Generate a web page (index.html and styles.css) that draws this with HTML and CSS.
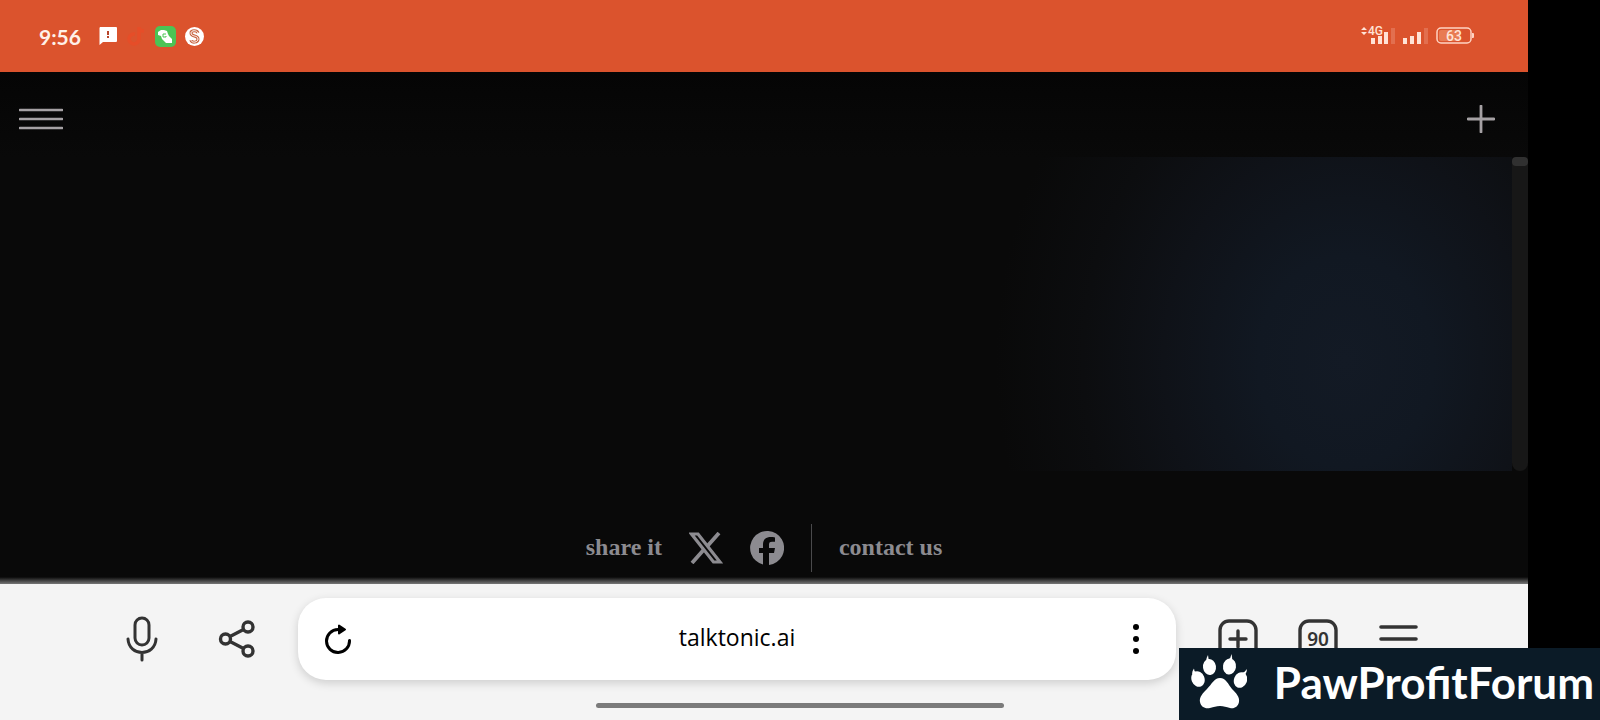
FILE: index.html
```html
<!DOCTYPE html>
<html lang="en">
<head>
    <meta charset="UTF-8">
    <meta name="viewport" content="width=device-width, initial-scale=1.0">
    <title>talktonic.ai</title>
    <link rel="stylesheet" href="styles.css">
</head>
<body>
    <div class="phone">
        <!-- Status bar -->
        <div class="status">
            <div class="status-left">
                <span class="time">9:56</span>
                <svg width="18" height="18" viewBox="0 0 18 18">
                    <path d="M1 0h16a1 1 0 0 1 1 1v13a1 1 0 0 1-1 1H4l-3.500 3V1z" fill="#fff"/>
                    <path d="M9 4v4M9 9v2" stroke="#b8452a" stroke-width="2"/>
                </svg>
                <svg width="20" height="20" viewBox="0 0 20 20" fill="none" stroke="#e64d28" stroke-width="3.500">
                    <path d="M9 8a5 5 0 1 0 4 5V1c0 3 2 4 5 4"/>
                </svg>
                <svg width="21" height="21" viewBox="0 0 21 21">
                    <rect width="21" height="21" rx="5" fill="#4bc455"/>
                    <path d="M3 6l3-2h3l3 1 1 3 1 2 3 3v4h-6l-4-4-1-3-3-1z" fill="#fff"/>
                    <path d="M11 8H8v3h3v-1" fill="none" stroke="#4bc455"/>
                </svg>
                <svg width="19" height="19" viewBox="0 0 19 19" fill="none">
                    <circle cx="9.500" cy="9.500" r="9.500" fill="#fff"/>
                    <path d="M13 6c-1-3-7-3-7 0 0 4 7 2 7 6 0 4-7 4-7 1" stroke="#c9633f" stroke-width="3"/>
                    <path d="M13 6c-1-3-7-3-7 0 0 4 7 2 7 6 0 4-7 4-7 1" stroke="#fff"/>
                </svg>
            </div>
            <div class="status-right">
                <svg width="34" height="24" viewBox="0 -3 34 24" fill="#ffe3d6">
                    <path d="M0 3l3-3 3 3zM0 5l3 3 3-3z"/>
                    <text class="net" x="7" y="8">4G</text>
                    <path d="M10 11h4v6h-4zM17 9h4v8h-4zM23 5h4v12h-4z"/>
                    <path d="M30 1h4v16h-4z" opacity=".2"/>
                </svg>
                <svg width="25" height="18" viewBox="0 0 25 18" fill="#ffe3d6">
                    <path d="M0 11h4v6H0zM7 9h4v8H7zM14 5h4v12h-4z"/>
                    <path d="M21 1h4v16h-4z" opacity=".2"/>
                </svg>
                <svg width="38" height="18" viewBox="0 0 38 18">
                    <rect x="1" y="1" width="34" height="15" rx="4" fill="none" stroke="#ffd3c2" stroke-width="1.500"/>
                    <rect x="3" y="3" width="20" height="11" rx="2" fill="#e87b53"/>
                    <path d="M36 6h1q1 0 1 1v3q0 1-1 1h-1z" fill="#ffd3c2"/>
                    <text class="charge" x="18" y="14" text-anchor="middle">63</text>
                </svg>
            </div>
        </div>

        <!-- Page -->
        <header class="topbar">
            <button class="icon-btn" aria-label="Menu">
                <svg width="44" height="22" viewBox="0 0 44 22" stroke="#a5a1a4" stroke-width="2.600" stroke-linecap="round">
                    <path d="M1 2h42M1 11h42M1 20h42"/>
                </svg>
            </button>
            <button class="icon-btn" aria-label="New chat">
                <svg width="28" height="28" viewBox="0 0 28 28" stroke="#a5a1a4" stroke-width="2.800" stroke-linecap="round">
                    <path d="M14 1v26M1 14h26"/>
                </svg>
            </button>
        </header>
        <main class="chat">
            <div class="glow"></div>
            <div class="track"><div class="thumb"></div></div>
        </main>
        <footer class="share">
            <span>share it</span>
            <a href="#" aria-label="Share on X">
                <svg width="34" height="32" viewBox="0 0 34 32" fill="none" stroke="#8c8b90">
                    <path d="M2.500 2h6.500L31 30h-6.500z" stroke-width="3.200"/>
                    <path d="M30 1L18.500 14M14.500 18L3 31" stroke-width="3.800"/>
                </svg>
            </a>
            <a href="#" aria-label="Share on Facebook">
                <svg width="34" height="34" viewBox="0 0 34 34">
                    <path d="M13 33.500A17 17 0 1 1 19 33.900V22h5l1-5h-6v-3.500c0-2 1-2.700 3-2.700h3V6.500c-7-1.500-12 .5-12 7V17H9v5h4z" fill="#8c8b90"/>
                </svg>
            </a>
            <a class="contact" href="#">contact us</a>
        </footer>

        <!-- Browser toolbar -->
        <nav class="toolbar">
            <button class="icon-btn tool" aria-label="Voice search">
                <svg width="32" height="46" viewBox="0 0 32 46" fill="none" stroke="#333" stroke-width="3" stroke-linecap="round">
                    <rect x="9" y="2" width="14" height="27" rx="7"/>
                    <path d="M2 23c1 18 27 18 28 0M16 37v7"/>
                </svg>
            </button>
            <button class="icon-btn tool" aria-label="Share">
                <svg width="38" height="38" viewBox="0 0 38 38" fill="none" stroke="#333" stroke-width="3.400">
                    <circle cx="7.500" cy="19" r="5"/>
                    <circle cx="30" cy="7" r="5"/>
                    <circle cx="30" cy="31" r="5"/>
                    <path d="M12 16.500L25.500 9.500M12 21.500l13.500 7"/>
                </svg>
            </button>
            <div class="address">
                <button class="icon-btn" aria-label="Reload">
                    <svg width="28" height="30" viewBox="0 0 28 30" fill="none" stroke="#000" stroke-width="3" stroke-linecap="round">
                        <path d="M25.500 16.500A11.500 11.500 0 1 1 14 5.500"/>
                        <path d="M15 1.500v8l6-4z" fill="#000" stroke-width="2" stroke-linejoin="round"/>
                    </svg>
                </button>
                <input class="url" type="text" value="talktonic.ai" aria-label="Address">
                <button class="icon-btn" aria-label="Page options">
                    <svg width="28" height="30" viewBox="0 0 28 30">
                        <circle cx="14" cy="3" r="3"/>
                        <circle cx="14" cy="15" r="3"/>
                        <circle cx="14" cy="27" r="3"/>
                    </svg>
                </button>
            </div>
            <button class="icon-btn tool" aria-label="New tab">
                <svg width="40" height="40" viewBox="0 0 40 40" fill="none" stroke="#333" stroke-width="3.400" stroke-linecap="round">
                    <rect x="2" y="2" width="36" height="36" rx="9"/>
                    <path d="M20 12v16M12 20h16"/>
                </svg>
            </button>
            <button class="icon-btn tool" aria-label="Tabs">
                <svg width="40" height="40" viewBox="0 0 40 40">
                    <rect x="2" y="2" width="36" height="36" rx="9" fill="none" stroke="#333" stroke-width="3.400"/>
                    <text class="tabs" x="20" y="27" text-anchor="middle">90</text>
                </svg>
            </button>
            <button class="icon-btn tool" aria-label="Browser menu">
                <svg width="40" height="28" viewBox="0 0 40 28" stroke="#333" stroke-width="3.600" stroke-linecap="round">
                    <path d="M3 2h35M3 14h35M3 26h35"/>
                </svg>
            </button>
        </nav>
    </div>

    <div class="home-line"></div>

    <div class="brand">
        <svg width="56" height="56" viewBox="0 0 56 56" fill="#fff">
            <ellipse cx="7" cy="25" rx="6.500" ry="8" transform="rotate(-22 7 25)"/>
            <ellipse cx="18.500" cy="13" rx="6.500" ry="8" transform="rotate(-8 18.500 13)"/>
            <ellipse cx="38.500" cy="12.500" rx="6.500" ry="8" transform="rotate(8 38.500 12.500)"/>
            <ellipse cx="49.500" cy="26" rx="6.500" ry="8" transform="rotate(22 49.500 26)"/>
            <path d="M1 20q0-3 2-5.500 0 3 2 4zM15 8q0-4 2-7 0 4 2 6zM37 6q3-2 3.500-6 1 4 .5 7zM51 19q3-1 5-4 0 3-2 6z"/>
            <path d="M29 24c6 0 8 6 12 11 4 4 8 8 7 13-1 5-5 7-9 6-4-1-6-2-10-2s-6 1-10 2c-5 1-9-1-10-6-1-5 3-9 7-13 5-5 7-11 13-11z"/>
        </svg>
        <span>PawProfitForum</span>
    </div>
</body>
</html>
```
FILE: styles.css
```css
body {
    margin: 0;
    background: #000;
    font-family: "Noto Sans", sans-serif;
}

.phone {
    display: flex;
    flex-direction: column;
    min-height: 100vh;
    margin-right: 72px;
    background: #090909;
}

.icon-btn {
    display: flex;
    align-items: center;
    justify-content: center;
    padding: 0;
    border: 0;
    background: none;
    cursor: pointer;
}

/* status bar */
.status {
    display: flex;
    justify-content: space-between;
    align-items: center;
    height: 72px;
    padding: 0 54px 0 39px;
    background: #db532d;
}

.status-left {
    display: flex;
    align-items: center;
    gap: 9px;
}

.time {
    margin-right: 9px;
    font-family: Lato, sans-serif;
    font-size: 21px;
    font-weight: bold;
    color: #fff0e8;
}

.status-right {
    display: flex;
    align-items: center;
    gap: 8px;
}

.net {
    font-family: Roboto, sans-serif;
    font-size: 12px;
    font-weight: 500;
}

.charge {
    font-family: Roboto, sans-serif;
    font-size: 14px;
    font-weight: 500;
    fill: #ffe3d6;
}

/* page */
.topbar {
    display: flex;
    justify-content: space-between;
    align-items: center;
    height: 85px;
    padding: 9px 33px 0 19px;
    box-sizing: border-box;
    background: linear-gradient(#050505, #090909);
}

.chat {
    display: flex;
    flex: 1;
}

.glow {
    flex: 1;
    background: radial-gradient(ellipse 350px 420px at 89% 65%, #131a25, #111822 25%, #0f1218 52%, #0c0d0f 75%, #090909 100%);
}

.track {
    width: 16px;
    border-radius: 8px;
    background: #171717;
}

.thumb {
    height: 9px;
    border-radius: 4px;
    background: #303030;
}

.share {
    display: flex;
    justify-content: center;
    align-items: center;
    gap: 27px;
    height: 113px;
    padding-top: 40px;
    box-sizing: border-box;
    background: linear-gradient(#090909 106px, #777);
    font-family: "Liberation Serif", serif;
    font-size: 24px;
    font-weight: bold;
    color: #8c8b90;
}

.share a {
    display: flex;
    color: inherit;
    text-decoration: none;
}

.share .contact {
    align-items: center;
    height: 48px;
    padding-left: 27px;
    border-left: 1px solid #4a4a4c;
}

/* browser toolbar */
.toolbar {
    display: flex;
    align-items: center;
    height: 136px;
    padding: 0 110px 27px 122px;
    box-sizing: border-box;
    background: #f4f4f4;
}

.tool {
    width: 40px;
    margin-right: 40px;
}

.tool:first-child {
    margin-right: 55px;
}

.tool:last-child {
    margin-right: 0;
}

.address {
    display: flex;
    align-items: center;
    flex: 1;
    height: 82px;
    min-width: 0;
    margin: 0 42px 0 1px;
    padding: 0 26px;
    box-sizing: border-box;
    border-radius: 28px;
    background: #fff;
    box-shadow: 0 3px 10px rgba(0, 0, 0, 0.16);
}

.url {
    flex: 1;
    min-width: 0;
    padding: 0 0 4px;
    border: 0;
    outline: 0;
    background: none;
    font-family: "Open Sans", "Noto Sans", sans-serif;
    font-size: 23px;
    text-align: center;
    color: #000;
}

.tabs {
    font-family: "Noto Sans", sans-serif;
    font-size: 19px;
    font-weight: 600;
    fill: #333;
}

.home-line {
    position: absolute;
    bottom: 12px;
    left: 50%;
    width: 408px;
    height: 5px;
    margin-left: -204px;
    border-radius: 3px;
    background: #7b7b7b;
}

/* forum badge in the corner */
.brand {
    position: absolute;
    right: 0;
    bottom: 0;
    display: flex;
    align-items: center;
    gap: 27px;
    height: 72px;
    padding: 0 6px 4px 12px;
    box-sizing: border-box;
    background: #0b1b27;
    font-family: Lato, sans-serif;
    font-size: 44px;
    font-weight: bold;
    color: #fff;
}
```
